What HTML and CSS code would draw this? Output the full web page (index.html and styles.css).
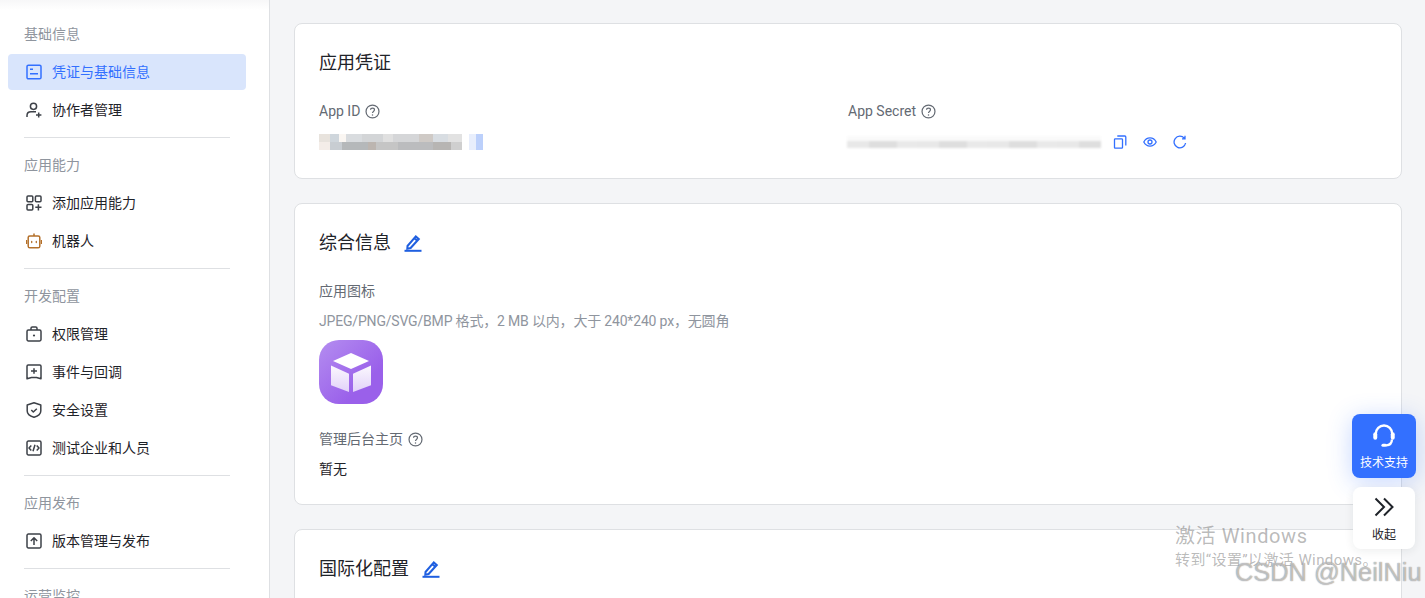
FILE: index.html
```html
<!DOCTYPE html>
<html lang="zh-CN">
<head>
<meta charset="utf-8">
<title>凭证与基础信息</title>
<link rel="stylesheet" href="styles.css">
</head>
<body>
<div class="page">
  <aside class="sidebar">
    <div class="group-title first">基础信息</div>
    <a class="nav-item active">
      <svg class="nav-icon" viewBox="0 0 16 16"><rect x="1" y="1.200" width="14" height="13.600" rx="1.400"/><path d="M4 5.200h3M4 9.800h8"/></svg>
      <span>凭证与基础信息</span>
    </a>
    <a class="nav-item">
      <svg class="nav-icon" viewBox="0 0 16 16"><circle cx="7.500" cy="4.300" r="3.100"/><path d="M1 15v-1.500C1 11 3 9.800 5 9.800h5M10 13h5.400M12.700 10.400v5.200"/></svg>
      <span>协作者管理</span>
    </a>
    <div class="divider"></div>
    <div class="group-title">应用能力</div>
    <a class="nav-item">
      <svg class="nav-icon" viewBox="0 0 16 16"><rect x="1" y="1" width="5.800" height="5.800" rx="1"/><rect x="9.400" y="1" width="5.600" height="5.800" rx="1"/><rect x="1" y="9.400" width="5.800" height="5.600" rx="1"/><path d="M9.300 12.300h6.200M12.400 9.200v6.400"/></svg>
      <span>添加应用能力</span>
    </a>
    <a class="nav-item">
      <svg class="nav-icon robot" viewBox="0 0 16 16"><rect x="2.200" y="3" width="11.600" height="11.800" rx="1.600"/><path d="M8 .6V3M.5 7v4M15.500 7v4"/><path class="dots" d="M5.700 8.300v1.300M10.300 8.300v1.300"/></svg>
      <span>机器人</span>
    </a>
    <div class="divider"></div>
    <div class="group-title">开发配置</div>
    <a class="nav-item">
      <svg class="nav-icon" viewBox="0 0 16 16"><rect x="1" y="4" width="14" height="11" rx="1.400"/><path d="M5 4V2.300C5 1.500 5.500 1 6.300 1h3.400c.8 0 1.300.5 1.300 1.300V4"/><circle class="fill-dot" cx="8" cy="9.500" r="1.100"/></svg>
      <span>权限管理</span>
    </a>
    <a class="nav-item">
      <svg class="nav-icon" viewBox="0 0 16 16"><path d="M1 2.200C1 1.500 1.500 1 2.200 1h11.600c.7 0 1.200.5 1.200 1.200v12.600l-4.500-1.300H5.500L1 14.800zM5 7h6M8 4.200v5.600"/></svg>
      <span>事件与回调</span>
    </a>
    <a class="nav-item">
      <svg class="nav-icon" viewBox="0 0 16 16"><path d="M8 .8l6.800 2.200v6c0 3-3.500 5.300-6.800 6.300-3.300-1-6.800-3.300-6.800-6.300V3zM5.300 8l2 2 3.500-3.300"/></svg>
      <span>安全设置</span>
    </a>
    <a class="nav-item">
      <svg class="nav-icon" viewBox="0 0 16 16"><rect x="1" y="1" width="14" height="14" rx="1.400"/><path d="M5.300 5.500L3 8l2.300 2.500M10.700 5.500L13 8l-2.300 2.500M9 4.800L7 11.200"/></svg>
      <span>测试企业和人员</span>
    </a>
    <div class="divider"></div>
    <div class="group-title">应用发布</div>
    <a class="nav-item">
      <svg class="nav-icon" viewBox="0 0 16 16"><rect x="1" y="1" width="14" height="14" rx="1.400"/><path d="M8 12V5M4.800 8L8 4.800 11.200 8"/></svg>
      <span>版本管理与发布</span>
    </a>
    <div class="divider"></div>
    <div class="group-title">运营监控</div>
  </aside>

  <main class="content">
    <section class="card card-credentials">
      <h2 class="card-title">应用凭证</h2>
      <div class="cred-row">
        <div class="cred-col">
          <div class="field-label">App ID
            <svg class="help" viewBox="0 0 16 16"><circle cx="8" cy="8" r="6.900"/><path d="M5.900 6.200C5.900 5 6.800 4.300 8 4.300s2.100.8 2.100 1.900c0 1.700-2.100 1.700-2.100 3.400"/><circle class="help-dot" cx="8" cy="11.600" r=".8"/></svg>
          </div>
          <div class="blur-row">
            <div class="mosaic mosaic-id"></div>
            <div class="mosaic mosaic-tail"></div>
          </div>
        </div>
        <div class="cred-col">
          <div class="field-label">App Secret
            <svg class="help" viewBox="0 0 16 16"><circle cx="8" cy="8" r="6.900"/><path d="M5.900 6.200C5.900 5 6.800 4.300 8 4.300s2.100.8 2.100 1.900c0 1.700-2.100 1.700-2.100 3.400"/><circle class="help-dot" cx="8" cy="11.600" r=".8"/></svg>
          </div>
          <div class="blur-row">
            <div class="mosaic mosaic-secret"></div>
            <svg class="act-icon" viewBox="0 0 14 14"><rect x="1.500" y="3.800" width="8" height="9.400" rx=".8"/><path d="M4.300 1h7.500c.6 0 1 .4 1 1v8.500"/></svg>
            <svg class="act-icon" viewBox="0 0 14 14"><path d="M.8 7C2.200 4.300 4.400 2.900 7 2.900s4.800 1.400 6.200 4.100c-1.400 2.700-3.600 4.100-6.200 4.100S2.200 9.700.8 7z"/><circle cx="7" cy="7" r="2"/></svg>
            <svg class="act-icon" viewBox="0 0 14 14"><path d="M12.600 8a5.800 5.800 0 1 1-1.300-4.800M12 .8v3h-3"/></svg>
          </div>
        </div>
      </div>
    </section>

    <section class="card card-general">
      <h2 class="card-title">综合信息
        <svg class="edit" viewBox="0 0 18 18"><path d="M3.500 12L11.800 2.400l3 2.600-8.200 9-3.300.8zM10.300 4.200l3 2.600"/><path d="M.5 16.800h17"/></svg>
      </h2>
      <div class="field-label icon-label">应用图标</div>
      <div class="hint">JPEG/PNG/SVG/BMP 格式，2 MB 以内，大于 240*240 px，无圆角</div>
      <div class="app-logo">
        <svg viewBox="0 0 64 64">
          <defs>
            <linearGradient id="cube-face" x1="0" y1="0" x2="0" y2="1">
              <stop offset="0" stop-color="#fbf8fe"/>
              <stop offset="1" stop-color="#e2d2f9"/>
            </linearGradient>
          </defs>
          <path class="cube-top" d="M32 13l18 8-18 8-18-8z"/>
          <path class="cube-side" d="M12 25.500l18 8.200V52l-18-6.800z"/>
          <path class="cube-side" d="M52 25.500l-18 8.200V52l18-6.800z"/>
        </svg>
      </div>
      <div class="field-label admin-label">管理后台主页
        <svg class="help" viewBox="0 0 16 16"><circle cx="8" cy="8" r="6.900"/><path d="M5.900 6.200C5.900 5 6.800 4.300 8 4.300s2.100.8 2.100 1.900c0 1.700-2.100 1.700-2.100 3.400"/><circle class="help-dot" cx="8" cy="11.600" r=".8"/></svg>
      </div>
      <div class="value">暂无</div>
    </section>

    <section class="card card-i18n">
      <h2 class="card-title">国际化配置
        <svg class="edit" viewBox="0 0 18 18"><path d="M3.500 12L11.800 2.400l3 2.600-8.200 9-3.300.8zM10.300 4.200l3 2.600"/><path d="M.5 16.800h17"/></svg>
      </h2>
    </section>
  </main>

  <div class="float-stack">
    <div class="float-btn support">
      <svg viewBox="0 0 24 24"><path d="M5 11.500V10a7 7 0 0 1 14 0v1.500"/><rect class="ear" x="2.800" y="8.800" width="3.400" height="6.400" rx="1.700"/><rect class="ear" x="17.800" y="8.800" width="3.400" height="6.400" rx="1.700"/><path d="M18.800 15c0 3-2 4.800-5 5"/><rect class="ear" x="9.800" y="18.700" width="4.600" height="2.600" rx="1.300"/></svg>
      <span>技术支持</span>
    </div>
    <div class="float-btn collapse">
      <svg viewBox="0 0 24 24"><path d="M3.500 3.500L12 12l-8.500 8.500M12 3.500l8.500 8.500-8.500 8.500"/></svg>
      <span>收起</span>
    </div>
  </div>

  <div class="watermark">
    <div class="wm-title">激活 Windows</div>
    <div class="wm-sub">转到“设置”以激活 Windows。</div>
  </div>
  <div class="csdn">CSDN @NeilNiu</div>
</div>
</body>
</html>
```

FILE: styles.css
```css
* { box-sizing: border-box; }

html, body {
  margin: 0;
  height: 100%;
  overflow: hidden;
}

body {
  font-family: Roboto, "Noto Sans CJK SC", sans-serif;
  font-size: 14px;
  color: #1f2329;
  background: #f4f5f7;
}

.page {
  position: relative;
  display: flex;
  width: 1425px;
  height: 598px;
  overflow: hidden;
}

.sidebar {
  flex: 0 0 270px;
  height: 598px;
  padding: 0 23px 0 8px;
  background: linear-gradient(#f7f7f8, #fff 10px);
  border-right: 1px solid #dee0e3;
  overflow: hidden;
}

.group-title {
  height: 20px;
  margin: 18px 0 10px 16px;
  font-size: 14px;
  line-height: 20px;
  color: #8f959e;
}

.group-title.first { margin-top: 24px; }

.nav-item {
  display: flex;
  align-items: center;
  gap: 10px;
  height: 36px;
  margin-bottom: 2px;
  padding-left: 18px;
  border-radius: 4px;
  font-size: 14px;
  line-height: 36px;
  color: #1f2329;
}

.nav-item.active {
  background: #d9e5fc;
  color: #3370ff;
}

.nav-icon {
  flex: none;
  width: 16px;
  height: 16px;
  fill: none;
  stroke: #3d4148;
  stroke-width: 1.500;
  stroke-linejoin: round;
}

.active .nav-icon { stroke: #3370ff; }
.robot { stroke: #b4702a; }
.nav-icon .dots { stroke-linecap: round; stroke-width: 1.300; }
.fill-dot { fill: #3d4148; stroke: none; }

.divider {
  height: 1px;
  margin: 9px 16px 0;
  background: #dee0e3;
}

.divider + .group-title { margin-top: 17px; }

.content {
  flex: 1;
  display: flex;
  flex-direction: column;
  gap: 24px;
  padding: 23px 24px 0;
}

.card {
  flex: none;
  padding: 0 24px;
  background: #fff;
  border: 1px solid #dee0e3;
  border-radius: 8px;
}

.card-credentials { height: 156px; padding-top: 26px; }
.card-general { height: 302px; padding-top: 26px; }
.card-i18n { height: 120px; padding-top: 26px; }

.card-title {
  display: flex;
  align-items: center;
  gap: 13px;
  height: 26px;
  margin: 0;
  font-size: 18px;
  font-weight: 400;
  line-height: 26px;
  color: #1f2329;
}

.cred-row {
  display: flex;
  margin-top: 25px;
}

.cred-col { flex: 0 0 529px; }

.field-label {
  display: flex;
  align-items: center;
  gap: 5px;
  height: 20px;
  font-size: 14px;
  line-height: 20px;
  color: #646a73;
}

.help {
  width: 15px;
  height: 15px;
  fill: none;
  stroke: #646a73;
  stroke-width: 1.300;
}

.help-dot { fill: #646a73; stroke: none; }

.blur-row {
  display: flex;
  align-items: center;
  height: 20px;
  margin-top: 11px;
}

.mosaic { height: 16px; flex: none; filter: blur(.7px); }

.mosaic-id {
  width: 143px;
  background:
    linear-gradient(90deg, #e8e3dd 0 8%, #cfd6dc 8% 14%, #faf6f2 14% 19%, #d9dcdf 19% 30%, #d3d5d7 30% 45%, #e0e0e0 45% 52%, #d5d6d8 52% 70%, #cfcac6 70% 80%, #d8dde2 80% 90%, #e2e2e2 90%) 0 0 / 100% 50% no-repeat,
    linear-gradient(90deg, #f4ede8 0 8%, #c8cdd2 8% 16%, #b5b8ba 16% 34%, #bcb5b0 34% 40%, #c5c5c5 40% 55%, #bbbcbe 55% 80%, #b7b5b3 80% 92%, #cfcfcf 92%) 0 100% / 100% 50% no-repeat;
}

.mosaic-tail {
  width: 14px;
  margin-left: 7px;
  background: linear-gradient(90deg, #e8eefc 50%, #bcd0fb 50%);
}

.mosaic-secret {
  width: 254px;
  height: 12px;
  margin: 0 12px 0 -1px;
  filter: blur(1px);
  background:
    linear-gradient(#fafafa 45%, transparent 45%),
    repeating-linear-gradient(90deg, #e8e8e8 0 22px, #dedede 22px 50px, #e9e9e9 50px 70px);
}

.act-icon {
  flex: none;
  width: 14px;
  height: 14px;
  margin-right: 16px;
  fill: none;
  stroke: #3370ff;
  stroke-width: 1.300;
}

.edit {
  width: 18px;
  height: 18px;
  fill: none;
  stroke: #1f5fe0;
  stroke-width: 2;
}

.icon-label { margin-top: 25px; }

.hint {
  height: 20px;
  margin-top: 10px;
  font-size: 14px;
  letter-spacing: -.18px;
  line-height: 20px;
  color: #8f959e;
}

.app-logo {
  width: 64px;
  height: 64px;
  margin-top: 9px;
  border-radius: 20px;
  background: linear-gradient(135deg, #b48df0, #9a60ea 70%);
}

.app-logo svg { display: block; width: 64px; height: 64px; }
.cube-top { fill: #fff; }
.cube-side { fill: url(#cube-face); }

.admin-label { margin-top: 25px; }

.value {
  height: 20px;
  margin-top: 10px;
  font-size: 14px;
  line-height: 20px;
  color: #1f2329;
}

.float-stack {
  position: absolute;
  top: 414px;
  left: 1352px;
  display: flex;
  flex-direction: column;
  align-items: center;
  gap: 9px;
  width: 64px;
}

.float-btn {
  display: flex;
  flex-direction: column;
  align-items: center;
  font-size: 12px;
  line-height: 18px;
}

.float-btn svg { display: block; fill: none; stroke-width: 2; }

.support {
  width: 64px;
  height: 64px;
  padding-top: 8px;
  gap: 4px;
  color: #fff;
  background: #3370ff;
  border-radius: 8px;
  box-shadow: 0 4px 24px rgba(51, 112, 255, .28);
}

.support svg { width: 28px; height: 28px; stroke: #fff; }
.ear { fill: #fff; stroke: none; }

.collapse {
  width: 62px;
  height: 62px;
  padding-top: 8px;
  gap: 7px;
  color: #1f2329;
  background: #fff;
  border-radius: 8px;
  box-shadow: 0 2px 10px rgba(31, 35, 41, .08);
}

.collapse svg { width: 24px; height: 24px; stroke: #1f2329; }

.watermark {
  position: absolute;
  top: 522px;
  left: 1175px;
  color: rgba(110, 110, 110, .48);
  pointer-events: none;
}

.wm-title { font-size: 20px; line-height: 28px; letter-spacing: .6px; }
.wm-sub { font-size: 15px; line-height: 20px; letter-spacing: .4px; }

.csdn {
  position: absolute;
  top: 555px;
  left: 1235px;
  font-family: "Liberation Sans", sans-serif;
  font-size: 25.400px;
  line-height: 34px;
  white-space: nowrap;
  color: rgba(255, 255, 255, .55);
  text-shadow: 0 0 1px rgba(90, 90, 90, .9);
  pointer-events: none;
}
```
